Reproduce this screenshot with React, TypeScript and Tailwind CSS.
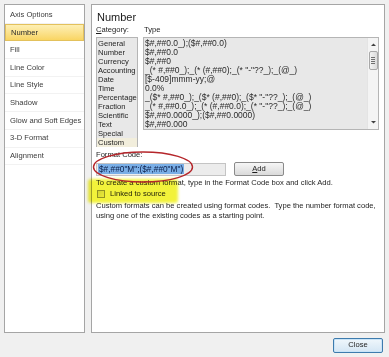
import React from "react";

const navItems = [
  "Axis Options",
  "Number",
  "Fill",
  "Line Color",
  "Line Style",
  "Shadow",
  "Glow and Soft Edges",
  "3-D Format",
  "Alignment",
];

const categories = [
  "General",
  "Number",
  "Currency",
  "Accounting",
  "Date",
  "Time",
  "Percentage",
  "Fraction",
  "Scientific",
  "Text",
  "Special",
  "Custom",
];

const types = [
  "$#,##0.0_);($#,##0.0)",
  "$#,##0.0",
  "$#,##0",
  '_(* #,##0_);_(* (#,##0);_(* "-"??_);_(@_)',
  "[$-409]mmm-yy;@",
  "0.0%",
  '_($* #,##0_);_($* (#,##0);_($* "-"??_);_(@_)',
  '_(* #,##0.0_);_(* (#,##0.0);_(* "-"??_);_(@_)',
  "$#,##0.0000_);($#,##0.0000)",
  "$#,##0.000",
];

function Scrollbar() {
  return (
    <div className="flex w-[11px] flex-col items-center border-l border-[#e4e4e4] bg-[#f4f4f4]">
      <svg width="7" height="8" viewBox="0 0 7 8" className="mt-[3px]">
        <path d="M1 5 L3.5 2.5 L6 5 Z" fill="#404040" />
      </svg>
      <div className="mt-[2px] flex h-[19px] w-[9px] flex-col items-center justify-center gap-[1px] rounded-[2px] border border-[#a8a8a8] bg-gradient-to-r from-[#f3f3f3] to-[#dcdcdc]">
        <div className="h-px w-[4px] bg-[#707070]" />
        <div className="h-px w-[4px] bg-[#707070]" />
        <div className="h-px w-[4px] bg-[#707070]" />
        <div className="h-px w-[4px] bg-[#707070]" />
      </div>
      <div className="flex-1" />
      <svg width="7" height="8" viewBox="0 0 7 8" className="mb-[3px]">
        <path d="M1 3 L3.5 5.5 L6 3 Z" fill="#404040" />
      </svg>
    </div>
  );
}

export default function App() {
  return (
    <div
      className="flex h-[357px] w-[389px] flex-col bg-[#f0f0f0] text-[#1e1e1e]"
      style={{ fontFamily: "'Liberation Sans', Arial, sans-serif" }}
    >
      <div className="flex h-[333px] gap-[6px] px-[4px] pt-[4px]">
        {/* left nav */}
        <div className="w-[81px] border border-[#a5a5a5] bg-white pt-[1px]">
          {navItems.map((item) => (
            <div
              key={item}
              className={[
                "flex h-[17.7px] items-center pl-[5px] text-[7.6px]",
                item === "Number"
                  ? "border border-[#e3c15c] bg-gradient-to-b from-[#fdefb4] to-[#f9d562] text-[#2a2a2a]"
                  : "border-b border-[#f2f2f2] text-[#3c3c3c]",
              ].join(" ")}
            >
              {item}
            </div>
          ))}
        </div>

        {/* right panel */}
        <div className="relative flex-1 border border-[#a5a5a5] bg-white pl-[4px] pr-[5px] pt-[4px]">
          <div className="h-[16px] pl-[1px] text-[11px] leading-[16px] text-[#1a1a1a]">Number</div>
          <div className="flex h-[10px] items-center text-[7.6px]">
            <div className="w-[48px]">
              <span className="underline">C</span>ategory:
            </div>
            <div>Type</div>
          </div>

          <div className="mt-[2px] flex gap-[5px]">
            <div className="h-[110px] w-[42px] border border-[#b5b5b5] bg-[#e8e8e8] py-[1px] text-[7.6px]">
              {categories.map((c) => (
                <div
                  key={c}
                  className={[
                    "h-[9px] pl-[1px] leading-[9px]",
                    c === "Custom" ? "bg-[#f2eedc]" : "",
                  ].join(" ")}
                >
                  {c}
                </div>
              ))}
            </div>
            <div className="flex h-[93px] flex-1 border border-[#b5b5b5] bg-[#e8e8e8]">
              <div className="flex-1 overflow-hidden whitespace-nowrap pl-[1px] pt-[1px] text-[8.5px] text-[#2a2a2a]">
                {types.map((t) => (
                  <div key={t} className="h-[9px] leading-[9px]">
                    {t}
                  </div>
                ))}
              </div>
              <Scrollbar />
            </div>
          </div>

          <div className="mt-[3px] h-[10px] text-[7.6px] leading-[10px]">Format Code:</div>
          <div className="mt-[2px] flex items-center gap-[8px]">
            <div className="flex h-[13px] w-[130px] items-center border border-[#c4c4c4] bg-[#ececec] pl-[1px]">
              <span className="bg-[#79aee6] px-px text-[8.3px] leading-[10px] text-[#0c1f4a]">
                $#,##0"M";($#,##0"M")
              </span>
            </div>
            <div className="flex h-[14px] w-[50px] items-center justify-center rounded-[2px] border border-[#8a8a8a] bg-gradient-to-b from-[#f6f6f6] to-[#dadada] text-[7.6px]">
              <span>
                <span className="underline">A</span>dd
              </span>
            </div>
          </div>

          <div className="mt-[2px] h-[10px] text-[7.6px] leading-[10px]">
            To create a custom format, type in the Format Code box and click Add.
          </div>
          <div className="flex h-[12px] items-center gap-[5px] pl-[1px] text-[7.6px]">
            <div className="h-[8px] w-[8px] border border-[#9a9a9a] bg-gradient-to-br from-[#dedede] to-[#f8f8f8]" />
            <span>Linked to source</span>
          </div>
          <div className="mt-[1px] text-[7.6px] leading-[10px]">
            <div>Custom formats can be created using format codes.&nbsp; Type the number format code,</div>
            <div>using one of the existing codes as a starting point.</div>
          </div>

          {/* annotations */}
          <div className="pointer-events-none absolute left-[-4px] top-[174px] h-[24px] w-[90px] rounded-[3px] bg-[#f2f23a] mix-blend-multiply blur-[1.5px]" />
          <svg
            className="pointer-events-none absolute left-[0px] top-[145px]"
            width="104"
            height="34"
            viewBox="0 0 104 34"
          >
            <ellipse cx="51" cy="17" rx="49.5" ry="15" fill="none" stroke="#b5262b" strokeWidth="1.4" />
          </svg>
        </div>
      </div>

      <div className="flex flex-1 items-center justify-end pr-[6px]">
        <div className="flex h-[15px] w-[50px] items-center justify-center rounded-[2px] border border-[#3d7bad] bg-gradient-to-b from-[#f0f7fc] to-[#d4e6f4] text-[7.6px] shadow-[inset_0_0_0_1px_#c9e4f8]">
          Close
        </div>
      </div>
    </div>
  );
}
